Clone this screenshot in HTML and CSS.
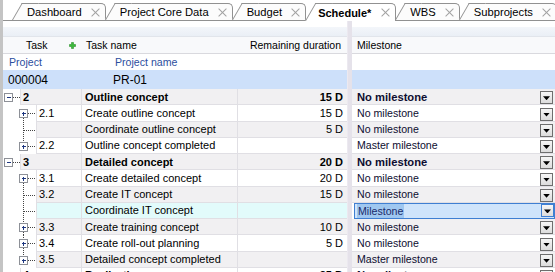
FILE: index.html
```html
<!DOCTYPE html>
<html lang="en">

<head>
    <meta charset="UTF-8">
    <title>Schedule</title>
    <link rel="stylesheet" href="styles.css">
</head>

<body>
    <div class="app">
        <!-- tab strip -->
        <div class="tabs">
            <div class="tab">Dashboard<i class="x"></i></div>
            <div class="tab">Project Core Data<i class="x"></i></div>
            <div class="tab">Budget<i class="x"></i></div>
            <div class="tab active">Schedule*<i class="x"></i></div>
            <div class="tab">WBS<i class="x"></i></div>
            <div class="tab">Subprojects<i class="x"></i></div>
        </div>

        <div class="grid">
            <!-- frozen left part -->
            <div class="pane left">
                <div class="gap"></div>
                <div class="band"></div>
                <div class="hdr">
                    <div class="h-task">Task
                        <svg class="add" width="7" height="7" viewBox="0 0 7 7"><path d="M2.5 0.5h2v2h2v2h-2v2h-2v-2h-2v-2h2z" fill="#3cbc3c" stroke="#2a8f2a" stroke-width="0.6"/></svg>
                    </div>
                    <div class="h-name">Task name</div>
                    <div class="h-dur">Remaining duration</div>
                </div>
                <div class="prj-hdr"><span class="p-no">Project</span><span class="p-name">Project name</span></div>
                <div class="prj"><span class="p-no">000004</span><span class="p-name">PR-01</span></div>

                <div class="row l1 alt">
                    <svg class="tree1" width="17" height="16" viewBox="0 0 17 16"><rect x="1.5" y="4.5" width="8" height="8" fill="#fff" stroke="#8d9097"/><path d="M3.5 8.5h4" stroke="#1e3780"/><path d="M10 8.5h7" stroke="#444" stroke-dasharray="1 1"/></svg>
                    <div class="num">2</div><div class="name">Outline concept</div><div class="dur">15 D</div>
                </div>
                <div class="row">
                    <svg class="tree2" width="33" height="16" viewBox="0 0 33 16"><path d="M20.5 13v3" stroke="#444" stroke-dasharray="1 1"/><rect x="16.5" y="4.5" width="8" height="8" fill="#fff" stroke="#8d9097"/><path d="M18.5 8.5h4M20.5 6.5v4" stroke="#1e3780"/><path d="M25 8.5h8" stroke="#444" stroke-dasharray="1 1"/></svg>
                    <div class="num">2.1</div><div class="name">Create outline concept</div><div class="dur">15 D</div>
                </div>
                <div class="row alt">
                    <svg class="tree2" width="33" height="16" viewBox="0 0 33 16"><path d="M20.5 0v16M21 8.5h12" stroke="#444" stroke-dasharray="1 1"/></svg>
                    <div class="num"></div><div class="name">Coordinate outline concept</div><div class="dur">5 D</div>
                </div>
                <div class="row">
                    <svg class="tree2" width="33" height="16" viewBox="0 0 33 16"><path d="M20.5 0v4" stroke="#444" stroke-dasharray="1 1"/><rect x="16.5" y="4.5" width="8" height="8" fill="#fff" stroke="#8d9097"/><path d="M18.5 8.5h4M20.5 6.5v4" stroke="#1e3780"/><path d="M25 8.5h8" stroke="#444" stroke-dasharray="1 1"/></svg>
                    <div class="num">2.2</div><div class="name">Outline concept completed</div><div class="dur"></div>
                </div>
                <div class="row l1 alt">
                    <svg class="tree1" width="17" height="16" viewBox="0 0 17 16"><rect x="1.5" y="4.5" width="8" height="8" fill="#fff" stroke="#8d9097"/><path d="M3.5 8.5h4" stroke="#1e3780"/><path d="M10 8.5h7" stroke="#444" stroke-dasharray="1 1"/></svg>
                    <div class="num">3</div><div class="name">Detailed concept</div><div class="dur">20 D</div>
                </div>
                <div class="row">
                    <svg class="tree2" width="33" height="16" viewBox="0 0 33 16"><path d="M20.5 13v3" stroke="#444" stroke-dasharray="1 1"/><rect x="16.5" y="4.5" width="8" height="8" fill="#fff" stroke="#8d9097"/><path d="M18.5 8.5h4M20.5 6.5v4" stroke="#1e3780"/><path d="M25 8.5h8" stroke="#444" stroke-dasharray="1 1"/></svg>
                    <div class="num">3.1</div><div class="name">Create detailed concept</div><div class="dur">20 D</div>
                </div>
                <div class="row alt">
                    <svg class="tree2" width="33" height="16" viewBox="0 0 33 16"><path d="M20.5 0v16M21 8.5h12" stroke="#444" stroke-dasharray="1 1"/></svg>
                    <div class="num">3.2</div><div class="name">Create IT concept</div><div class="dur">15 D</div>
                </div>
                <div class="row sel">
                    <svg class="tree2" width="33" height="16" viewBox="0 0 33 16"><path d="M20.5 0v16M21 8.5h12" stroke="#444" stroke-dasharray="1 1"/></svg>
                    <div class="num"></div><div class="name">Coordinate IT concept</div><div class="dur"></div>
                </div>
                <div class="row alt">
                    <svg class="tree2" width="33" height="16" viewBox="0 0 33 16"><path d="M20.5 0v4M20.5 13v3" stroke="#444" stroke-dasharray="1 1"/><rect x="16.5" y="4.5" width="8" height="8" fill="#fff" stroke="#8d9097"/><path d="M18.5 8.5h4M20.5 6.5v4" stroke="#1e3780"/><path d="M25 8.5h8" stroke="#444" stroke-dasharray="1 1"/></svg>
                    <div class="num">3.3</div><div class="name">Create training concept</div><div class="dur">10 D</div>
                </div>
                <div class="row">
                    <svg class="tree2" width="33" height="16" viewBox="0 0 33 16"><path d="M20.5 0v4M20.5 13v3" stroke="#444" stroke-dasharray="1 1"/><rect x="16.5" y="4.5" width="8" height="8" fill="#fff" stroke="#8d9097"/><path d="M18.5 8.5h4M20.5 6.5v4" stroke="#1e3780"/><path d="M25 8.5h8" stroke="#444" stroke-dasharray="1 1"/></svg>
                    <div class="num">3.4</div><div class="name">Create roll-out planning</div><div class="dur">5 D</div>
                </div>
                <div class="row alt">
                    <svg class="tree2" width="33" height="16" viewBox="0 0 33 16"><path d="M20.5 0v4" stroke="#444" stroke-dasharray="1 1"/><rect x="16.5" y="4.5" width="8" height="8" fill="#fff" stroke="#8d9097"/><path d="M18.5 8.5h4M20.5 6.5v4" stroke="#1e3780"/><path d="M25 8.5h8" stroke="#444" stroke-dasharray="1 1"/></svg>
                    <div class="num">3.5</div><div class="name">Detailed concept completed</div><div class="dur"></div>
                </div>
                <div class="row l1">
                    <svg class="tree1" width="17" height="16" viewBox="0 0 17 16"><rect x="1.5" y="4.5" width="8" height="8" fill="#fff" stroke="#8d9097"/><path d="M3.5 8.5h4" stroke="#1e3780"/><path d="M10 8.5h7" stroke="#444" stroke-dasharray="1 1"/></svg>
                    <div class="num">4</div><div class="name">Realization</div><div class="dur">25 D</div>
                </div>
            </div>

            <div class="split"></div>

            <!-- milestone column -->
            <div class="pane right">
                <div class="gap"></div>
                <div class="band"></div>
                <div class="hdr"><div class="h-ms">Milestone</div></div>
                <div class="prj-hdr"></div>
                <div class="prj"></div>

                <div class="ms l1 alt">No milestone<i class="dd"></i></div>
                <div class="ms">No milestone<i class="dd"></i></div>
                <div class="ms alt">No milestone<i class="dd"></i></div>
                <div class="ms">Master milestone<i class="dd"></i></div>
                <div class="ms l1 alt">No milestone<i class="dd"></i></div>
                <div class="ms">No milestone<i class="dd"></i></div>
                <div class="ms alt">No milestone<i class="dd"></i></div>
                <div class="ms edit">
                    <div class="edit-box"><span class="picked">Milestone</span><i class="dd"></i></div>
                </div>
                <div class="ms alt">No milestone<i class="dd"></i></div>
                <div class="ms">No milestone<i class="dd"></i></div>
                <div class="ms alt">Master milestone<i class="dd"></i></div>
                <div class="ms l1">No milestone<i class="dd"></i></div>
            </div>
        </div>
    </div>
</body>

</html>
```

FILE: styles.css
```css
/* page frame */

body {
    margin: 0;
    width: 555px;
    height: 272px;
    overflow: hidden;
    background: #fff;
    font-family: "Liberation Sans", Arial, sans-serif;
    color: #000;
}

.app {
    height: 272px;
    border-left: 3px solid #c4c4c4;
    overflow: hidden;
}


/* tabs */

.tabs {
    display: flex;
    align-items: flex-end;
    height: 20px;
    padding-left: 10px;
    border-bottom: 1px solid #919191;
}

.tab {
    position: relative;
    z-index: 0;
    display: flex;
    align-items: center;
    gap: 9px;
    height: 16px;
    margin-left: 9px;
    padding: 0 5px 0 5px;
    border-top: 1px solid #919191;
    border-right: 1px solid #919191;
    border-top-right-radius: 5px;
    background: #fcfcfc;
    font-size: 11.2px;
    white-space: nowrap;
}

/* slanted left edge */
.tab::before {
    content: "";
    position: absolute;
    z-index: -1;
    left: -10px;
    top: -1px;
    bottom: 0;
    width: 16px;
    border-left: 1px solid #919191;
    border-top: 1px solid #919191;
    background: inherit;
    transform-origin: 0 100%;
    transform: skewX(-30deg);
}

.tab.active {
    z-index: 1;
    height: 17px;
    margin-bottom: -1px;
    padding-left: 3px;
    gap: 10px;
    background: #fff;
    font-size: 11px;
    font-weight: bold;
}

.tab .x {
    position: relative;
    width: 9px;
    height: 9px;
}

.tab .x::before,
.tab .x::after {
    content: "";
    position: absolute;
    left: -1px;
    top: 4px;
    width: 11px;
    height: 1px;
    background: #a2a2a2;
    transform: rotate(45deg);
}

.tab .x::after {
    transform: rotate(-45deg);
}


/* grid with frozen part and milestone part */

.grid {
    display: flex;
}

.pane.left {
    width: 344px;
}

.pane.right {
    flex: 1;
}

.split {
    width: 5px;
    background: #e5e2ea;
    border-left: 1px solid #ece9f0;
    box-sizing: border-box;
}

.gap {
    height: 6px;
}

.band {
    height: 10px;
    background: linear-gradient(#f3f6fa, #eaeff6);
    border-bottom: 1px solid #e1e5eb;
    box-sizing: border-box;
}

.hdr {
    display: flex;
    align-items: center;
    height: 17px;
    background: #f8f9fb;
    border-bottom: 1px solid #d9d9de;
    box-sizing: border-box;
    font-size: 10.5px;
}

.h-task {
    display: flex;
    align-items: center;
    width: 79px;
    padding-left: 23px;
    box-sizing: border-box;
}

.h-task .add {
    margin-left: auto;
    margin-right: 6px;
}

.h-name {
    width: 156px;
    padding-left: 4px;
    box-sizing: border-box;
}

.h-dur {
    flex: 1;
    text-align: right;
    padding-right: 6px;
}

.h-ms {
    padding-left: 5px;
}

.prj-hdr {
    display: flex;
    align-items: center;
    height: 16px;
    font-size: 10.6px;
    color: #2c4e9e;
}

.prj-hdr .p-no {
    width: 108px;
    padding-left: 6px;
    box-sizing: border-box;
}

.prj-hdr .p-name {
    padding-left: 4px;
}

.prj {
    display: flex;
    align-items: center;
    height: 19px;
    background: #cde0fa;
    font-size: 12px;
}

.prj .p-no {
    width: 108px;
    padding-left: 5px;
    box-sizing: border-box;
}

.prj .p-name {
    padding-left: 2px;
}


/* task rows */

.row {
    display: flex;
    height: 16.25px;
    font-size: 11px;
}

.row svg {
    flex: none;
    shape-rendering: crispEdges;
}

.row .num,
.row .name,
.row .dur {
    display: flex;
    align-items: center;
    box-sizing: border-box;
    border-bottom: 1px solid #e0dfe4;
}

.row .num {
    flex: 1;
    padding-left: 2px;
    border-left: 1px solid #e0dfe4;
    border-right: 1px solid #e0dfe4;
}

.row .name {
    width: 156px;
    padding-left: 3px;
    border-right: 1px solid #e0dfe4;
}

.row .dur {
    width: 109px;
    justify-content: flex-end;
    padding-right: 4px;
}

.row.alt .num,
.row.alt .name,
.row.alt .dur {
    background: #f1f0f2;
}

.row.sel .num,
.row.sel .name,
.row.sel .dur {
    background: #e2fbfb;
}

.row.l1 {
    font-weight: bold;
}


/* milestone cells */

.ms {
    display: flex;
    align-items: center;
    height: 16.25px;
    padding-left: 5px;
    border-bottom: 1px solid #e0dfe4;
    box-sizing: border-box;
    font-size: 10.6px;
    color: #0d0d30;
}

.ms.alt {
    background: #f1f0f2;
}

.ms.l1 {
    font-weight: bold;
    font-size: 11.2px;
}

.dd {
    display: flex;
    justify-content: center;
    align-items: flex-end;
    align-self: flex-end;
    width: 13px;
    height: 13px;
    margin-left: auto;
    margin-right: 2px;
    padding-bottom: 3px;
    border: 1px solid #6e6e6e;
    background: linear-gradient(#f6f6f6, #dcdcdc);
    box-sizing: border-box;
}

.dd::after {
    content: "";
    width: 7px;
    height: 4px;
    background: #000;
    clip-path: polygon(0 0, 100% 0, 50% 100%);
}

.ms.edit {
    padding-left: 2px;
    border-bottom: 0;
}

.edit-box {
    display: flex;
    align-items: center;
    flex: 1;
    height: 100%;
    padding-left: 2px;
    border: 1px solid #3f7fd2;
    background: #cfe4fb;
    box-sizing: border-box;
}

.edit-box .dd {
    align-self: center;
    margin-right: 0;
    border-color: #3f7fd2;
}

.picked {
    padding: 1px 1px;
    background: #9fc7f0;
    color: #1a2a6a;
}
```
